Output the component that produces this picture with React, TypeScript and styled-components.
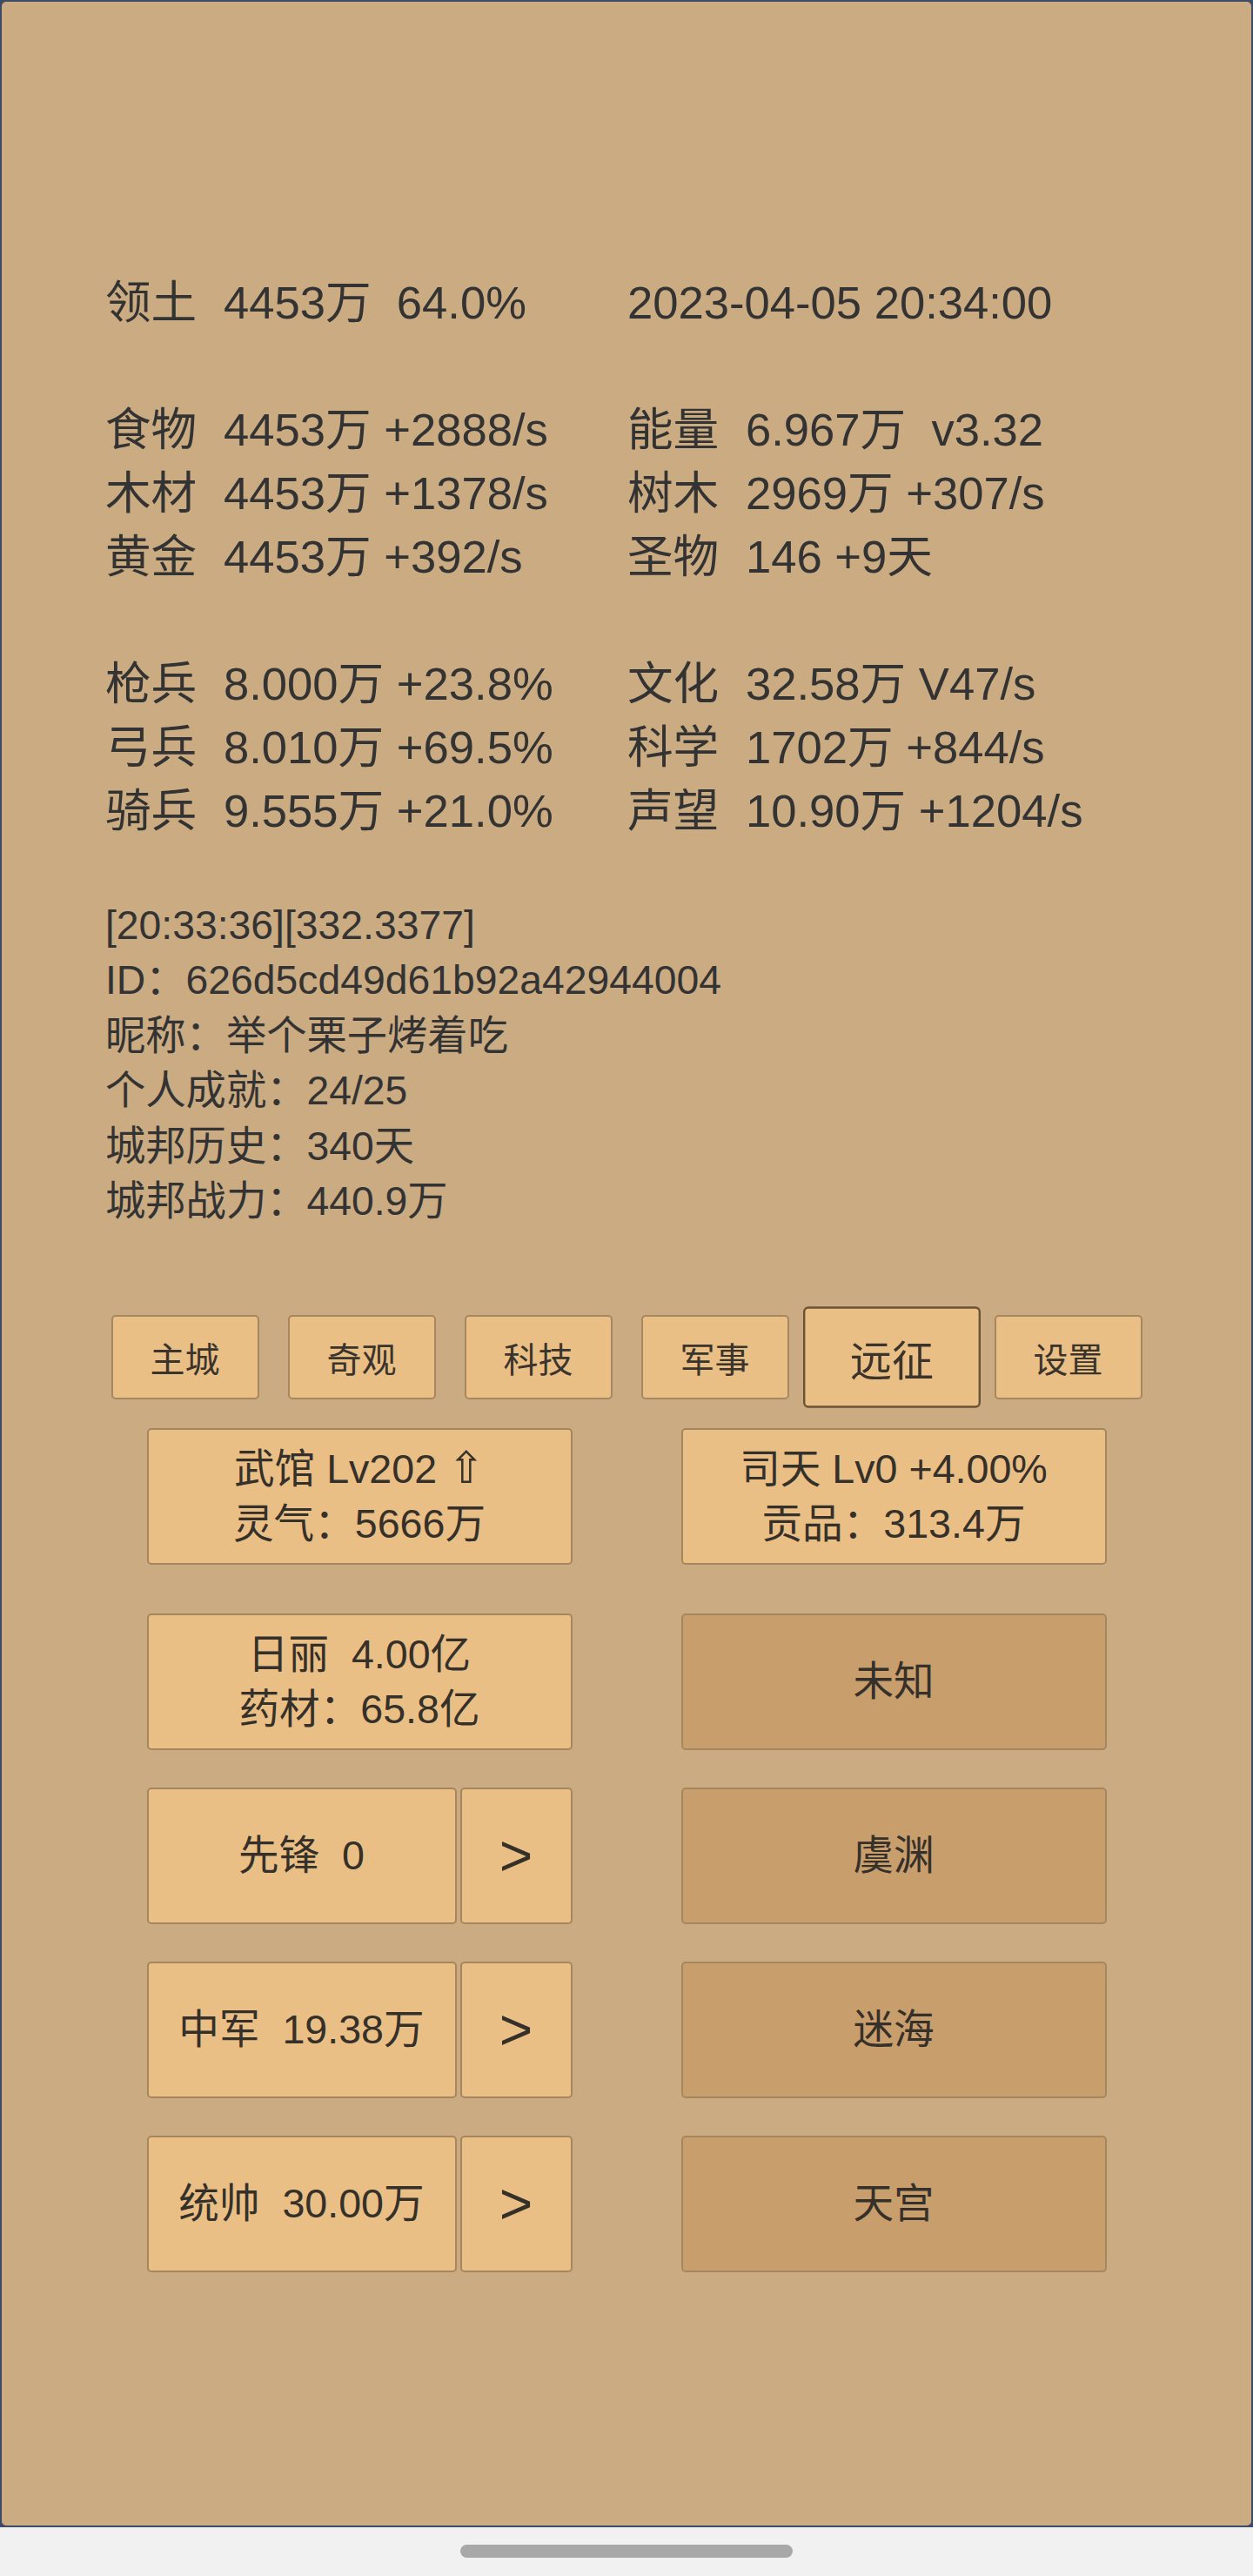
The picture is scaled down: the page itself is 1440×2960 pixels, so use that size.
import styled, { createGlobalStyle } from "styled-components"

const GlobalStyle = createGlobalStyle`
    html, body {
        margin: 0;
        padding: 0;
        background: #f1f1f1;
    }
    body {
        font-family: "Liberation Sans", "Noto Sans CJK SC", sans-serif;
        color: #333;
    }
`

const stats: [string, string][][] = [
    [["食物", "4453万 +2888/s"], ["能量", "6.967万  v3.32"]],
    [["木材", "4453万 +1378/s"], ["树木", "2969万 +307/s"]],
    [["黄金", "4453万 +392/s"], ["圣物", "146 +9天"]],
]

const troops: [string, string][][] = [
    [["枪兵", "8.000万 +23.8%"], ["文化", "32.58万 V47/s"]],
    [["弓兵", "8.010万 +69.5%"], ["科学", "1702万 +844/s"]],
    [["骑兵", "9.555万 +21.0%"], ["声望", "10.90万 +1204/s"]],
]

const logLines = [
    "[20:33:36][332.3377]",
    "ID：626d5cd49d61b92a42944004",
    "昵称：举个栗子烤着吃",
    "个人成就：24/25",
    "城邦历史：340天",
    "城邦战力：440.9万",
]

const tabs = ["主城", "奇观", "科技", "军事", "远征", "设置"]

const armies = [
    { name: "先锋  0", place: "虞渊" },
    { name: "中军  19.38万", place: "迷海" },
    { name: "统帅  30.00万", place: "天宫" },
]

const StatGroup = ({ rows }: { rows: [string, string][][] }) => (
    <StatGrid>
        {rows.map((row, i) =>
            row.map(([label, value], j) => (
                <Stat key={`${i}-${j}`}>
                    <StatLabel>{label}</StatLabel>
                    <StatValue>{value}</StatValue>
                </Stat>
            ))
        )}
    </StatGrid>
)

const App = () => {
    return (
        <>
            <GlobalStyle />
            <Screen>
                <Panel>
                    <StatGrid>
                        <Stat>
                            <StatLabel>领土</StatLabel>
                            <StatValue>{"4453万  64.0%"}</StatValue>
                        </Stat>
                        <Stat>
                            <StatValue>2023-04-05 20:34:00</StatValue>
                        </Stat>
                    </StatGrid>
                    <BlankLine />
                    <StatGroup rows={stats} />
                    <BlankLine />
                    <StatGroup rows={troops} />

                    <Log>
                        {logLines.map((line) => (
                            <LogLine key={line}>{line}</LogLine>
                        ))}
                    </Log>

                    <TabBar>
                        {tabs.map((t) => (
                            <TabButton key={t} $active={t === "远征"}>{t}</TabButton>
                        ))}
                    </TabBar>

                    <Cards>
                        <CardRow $first>
                            <Card>
                                <span>武馆 Lv202 <Up>⇧</Up></span>
                                <span>灵气：5666万</span>
                            </Card>
                            <Card>
                                <span>司天 Lv0 +4.00%</span>
                                <span>贡品：313.4万</span>
                            </Card>
                        </CardRow>
                        <CardRow>
                            <Card>
                                <span>{"日丽  4.00亿"}</span>
                                <span>药材：65.8亿</span>
                            </Card>
                            <Card $locked>未知</Card>
                        </CardRow>
                        {armies.map((a) => (
                            <CardRow key={a.place}>
                                <Split>
                                    <Card>{a.name}</Card>
                                    <ArrowCard>&gt;</ArrowCard>
                                </Split>
                                <Card $locked>{a.place}</Card>
                            </CardRow>
                        ))}
                    </Cards>
                </Panel>
            </Screen>
            <HomeBar>
                <HomePill />
            </HomeBar>
        </>
    )
}

export default App

const Screen = styled.div`
    box-sizing: border-box;
    height: 2904px;
    padding: 2px;
    background: #3d4b66;
`

const Panel = styled.div`
    box-sizing: border-box;
    height: 100%;
    background: #cbab82;
    border-radius: 5px;
    padding: 309px 0 0 119px;
    display: flex;
    flex-direction: column;
`

const StatGrid = styled.div`
    display: grid;
    grid-template-columns: 600px 600px;
    font-size: 52.6px;
    line-height: 73px;
`

const Stat = styled.div`
    display: flex;
    white-space: pre;
`

const StatLabel = styled.span`
    width: 136px;
    flex-shrink: 0;
`

const StatValue = styled.span`
    white-space: pre;
`

const BlankLine = styled.div`
    height: 73px;
`

const Log = styled.div`
    margin-top: 64px;
    font-size: 46.3px;
    line-height: 63.4px;
`

const LogLine = styled.div`
    white-space: pre;
`

const TabBar = styled.div`
    display: flex;
    justify-content: center;
    gap: 33px;
    margin: 99px 0 0 -119px;
`

const TabButton = styled.div<{ $active?: boolean }>`
    box-sizing: border-box;
    width: 170px;
    height: 97px;
    display: flex;
    align-items: center;
    justify-content: center;
    background: #eabf85;
    border: 2px solid ${(p) => (p.$active ? "#6b5236" : "#a6875f")};
    border-radius: 5px;
    font-size: 40px;
    color: #3a342c;
    transform: ${(p) => (p.$active ? "scale(1.2)" : "none")};
`

const Cards = styled.div`
    display: flex;
    flex-direction: column;
    gap: 43px;
    margin: 33px 0 0 -119px;
    align-items: center;
`

const CardRow = styled.div<{ $first?: boolean }>`
    display: grid;
    grid-template-columns: 489px 489px;
    column-gap: 125px;
    height: 157px;
    margin-bottom: ${(p) => (p.$first ? "13px" : "0")};
`

const Card = styled.div<{ $locked?: boolean }>`
    box-sizing: border-box;
    height: 157px;
    display: flex;
    flex-direction: column;
    align-items: center;
    justify-content: center;
    background: ${(p) => (p.$locked ? "#c99e6d" : "#eabf85")};
    border: 2px solid #a6865f;
    border-radius: 5px;
    font-size: 46.6px;
    line-height: 63px;
    color: #353029;
    white-space: pre;
`

const Split = styled.div`
    display: grid;
    grid-template-columns: 356px 129px;
    column-gap: 4px;
`

const ArrowCard = styled(Card)`
    font-size: 66px;
`

const Up = styled.span`
    font-family: "DejaVu Sans", sans-serif;
    font-size: 50px;
    line-height: 1;
`

const HomeBar = styled.div`
    height: 56px;
    display: flex;
    justify-content: center;
    padding-top: 20px;
    box-sizing: border-box;
`

const HomePill = styled.div`
    width: 382px;
    height: 15px;
    border-radius: 8px;
    background: #a8a8a8;
`
